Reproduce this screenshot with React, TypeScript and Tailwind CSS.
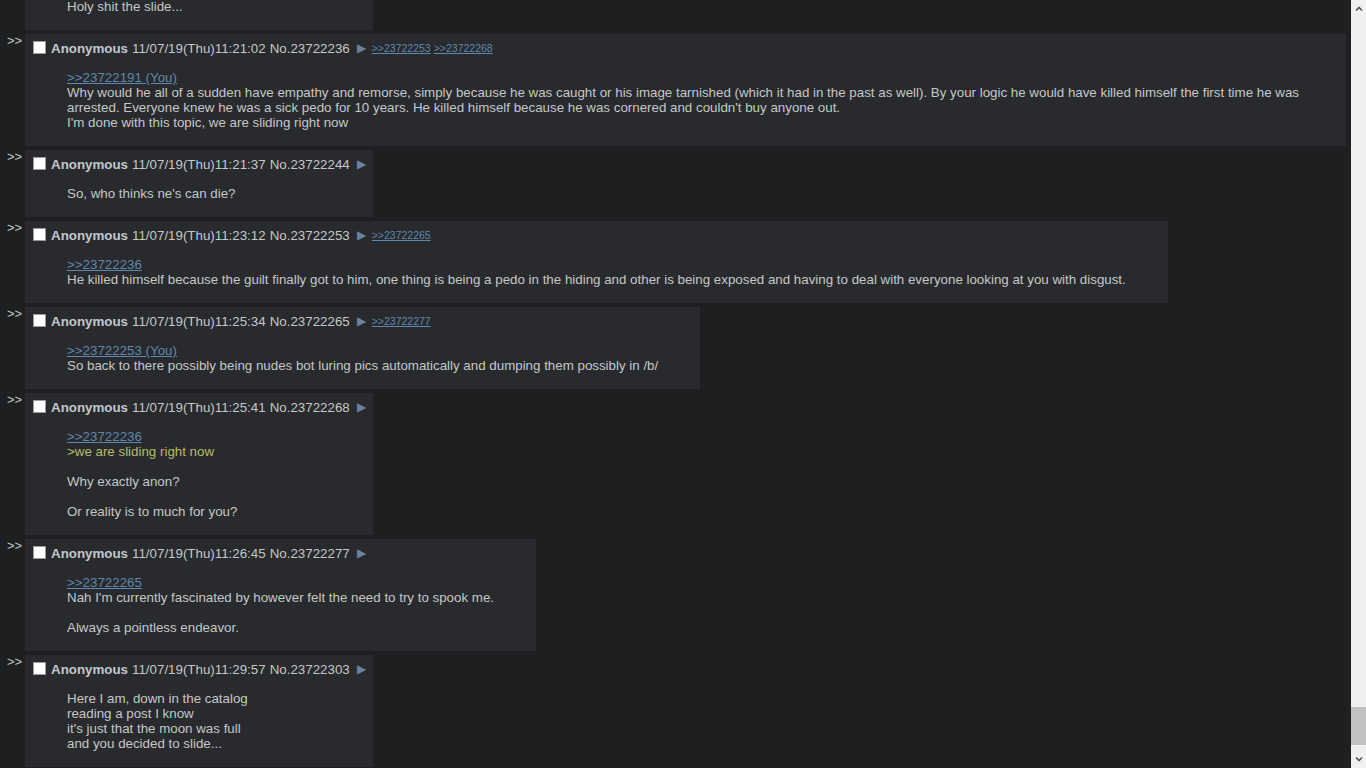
import React from 'react';

type Line = { kind: 'quote' | 'green' | 'text'; text: string } | null;

type Post = {
  time: string;
  no: string;
  backlinks: string[];
  lines: Line[];
};

const q = (text: string): Line => ({ kind: 'quote', text });
const g = (text: string): Line => ({ kind: 'green', text });
const t = (text: string): Line => ({ kind: 'text', text });

const posts: Post[] = [
  {
    time: '11/07/19(Thu)11:20:48',
    no: '23722231',
    backlinks: [],
    lines: [t('Holy shit the slide...')],
  },
  {
    time: '11/07/19(Thu)11:21:02',
    no: '23722236',
    backlinks: ['23722253', '23722268'],
    lines: [
      q('>>23722191 (You)'),
      t(
        "Why would he all of a sudden have empathy and remorse, simply because he was caught or his image tarnished (which it had in the past as well). By your logic he would have killed himself the first time he was arrested. Everyone knew he was a sick pedo for 10 years. He killed himself because he was cornered and couldn't buy anyone out."
      ),
      t("I'm done with this topic, we are sliding right now"),
    ],
  },
  {
    time: '11/07/19(Thu)11:21:37',
    no: '23722244',
    backlinks: [],
    lines: [t("So, who thinks ne's can die?")],
  },
  {
    time: '11/07/19(Thu)11:23:12',
    no: '23722253',
    backlinks: ['23722265'],
    lines: [
      q('>>23722236'),
      t(
        'He killed himself because the guilt finally got to him, one thing is being a pedo in the hiding and other is being exposed and having to deal with everyone looking at you with disgust.'
      ),
    ],
  },
  {
    time: '11/07/19(Thu)11:25:34',
    no: '23722265',
    backlinks: ['23722277'],
    lines: [
      q('>>23722253 (You)'),
      t('So back to there possibly being nudes bot luring pics automatically and dumping them possibly in /b/'),
    ],
  },
  {
    time: '11/07/19(Thu)11:25:41',
    no: '23722268',
    backlinks: [],
    lines: [
      q('>>23722236'),
      g('>we are sliding right now'),
      null,
      t('Why exactly anon?'),
      null,
      t('Or reality is to much for you?'),
    ],
  },
  {
    time: '11/07/19(Thu)11:26:45',
    no: '23722277',
    backlinks: [],
    lines: [
      q('>>23722265'),
      t("Nah I'm currently fascinated by however felt the need to try to spook me."),
      null,
      t('Always a pointless endeavor.'),
    ],
  },
  {
    time: '11/07/19(Thu)11:29:57',
    no: '23722303',
    backlinks: [],
    lines: [
      t('Here I am, down in the catalog'),
      t('reading a post I know'),
      t("it's just that the moon was full"),
      t('and you decided to slide...'),
    ],
  },
];

function BodyLine({ line }: { line: Line }) {
  if (!line) return <div className="h-[15px]" />;
  if (line.kind === 'quote')
    return (
      <div>
        <a className="text-[#5f89ac] underline cursor-pointer">{line.text}</a>
      </div>
    );
  if (line.kind === 'green') return <div className="text-[#b5bd68]">{line.text}</div>;
  return <div>{line.text}</div>;
}

function Reply({ post }: { post: Post }) {
  return (
    <div className="flex items-start">
      <div className="w-[18px] shrink-0 leading-[15px] -mt-px text-[13px] text-[#c5c8c6]">&gt;&gt;</div>
      <div className="bg-[#282a2e] p-[2px] min-w-0">
        <div className="mt-px h-[22px] flex items-center pl-[6px] pr-[5px] whitespace-nowrap">
          <span className="w-[13px] h-[13px] bg-white border border-[#9a9a9a] shrink-0 -mt-px" />
          <span className="ml-[5px] font-bold">Anonymous</span>
          <span className="ml-[4px]">{post.time}</span>
          <span className="ml-[4px]">No.{post.no}</span>
          <span className="ml-[7px] text-[12px] text-[#6a81a0]">▶</span>
          {post.backlinks.map((b, i) => (
            <a
              key={b}
              className={`${i === 0 ? 'ml-[6px]' : 'ml-[3px]'} text-[10.5px] text-[#5f89ac] underline cursor-pointer`}
            >
              &gt;&gt;{b}
            </a>
          ))}
        </div>
        <div className="mt-[11px] mb-[14px] mx-[40px]">
          {post.lines.map((l, i) => (
            <BodyLine key={i} line={l} />
          ))}
        </div>
      </div>
    </div>
  );
}

export default function App() {
  return (
    <div className="flex h-screen w-full overflow-hidden bg-[#1d1f21] font-['Liberation_Sans',Arial,sans-serif] text-[13.33px] leading-[15px] text-[#c5c8c6]">
      <main className="flex-1 min-w-0 overflow-hidden pl-[7px] pr-[5px]">
        <div className="-mt-[37px] flex flex-col gap-[4px]">
          {posts.map((p) => (
            <Reply key={p.no} post={p} />
          ))}
        </div>
      </main>
      <div className="w-[15px] shrink-0 h-full flex flex-col bg-[#f0f0f0]">
        <div className="h-[17px] flex items-center justify-center">
          <svg width="8" height="5" viewBox="0 0 8 5">
            <polyline points="1,4.5 4,1.5 7,4.5" fill="none" stroke="#505050" strokeWidth="1.6" />
          </svg>
        </div>
        <div className="flex-1 flex flex-col justify-end">
          <div className="h-[38px] mb-[6px] bg-[#c1c1c1]" />
        </div>
        <div className="h-[17px] flex items-center justify-center">
          <svg width="8" height="5" viewBox="0 0 8 5">
            <polyline points="1,0.5 4,3.5 7,0.5" fill="none" stroke="#505050" strokeWidth="1.6" />
          </svg>
        </div>
      </div>
    </div>
  );
}
